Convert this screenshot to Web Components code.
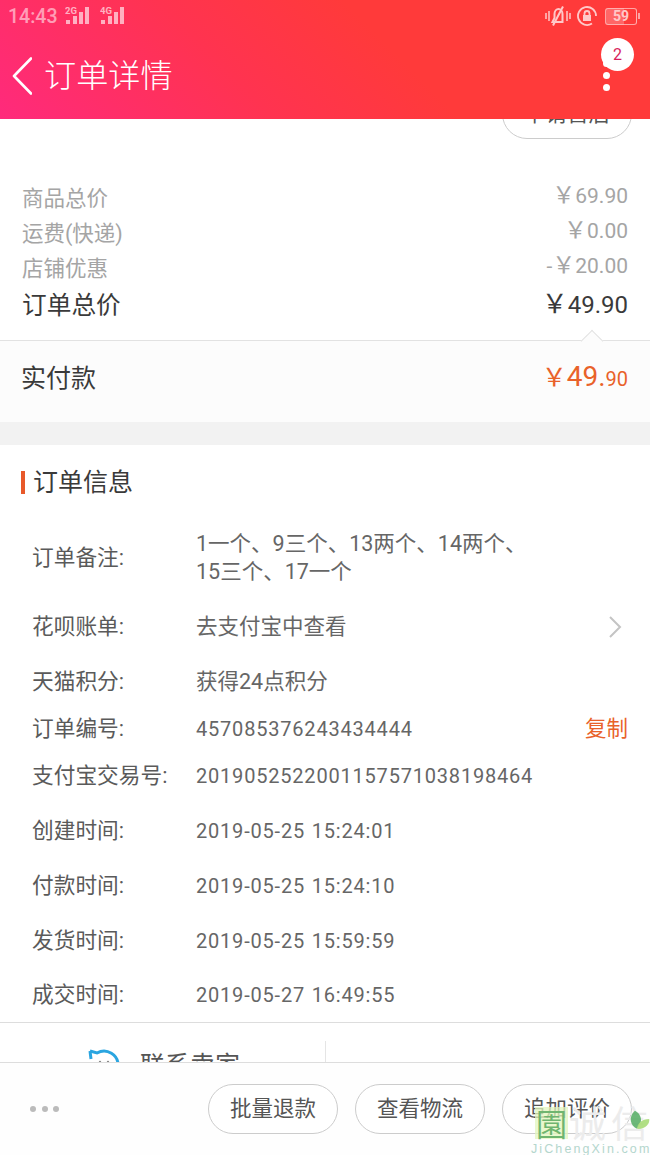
<!DOCTYPE html>
<html lang="zh">
<head>
<meta charset="utf-8">
<title>订单详情</title>
<style>
    html, body { margin: 0; padding: 0; background: #fff; }
    body {
        width: 650px;
        height: 1155px;
        overflow: hidden;
        display: flex;
        flex-direction: column;
        position: relative;
        font-family: Roboto, "Noto Sans CJK SC", sans-serif;
    }
    main { display: block; flex: 1; min-height: 0; overflow: hidden; }
</style>
</head>
<body>
    <app-header title="订单详情" count="2"></app-header>
    <main>
        <price-summary>
            <price-row label="商品总价" amount="69.90"></price-row>
            <price-row label="运费(快递)" amount="0.00"></price-row>
            <price-row label="店铺优惠" amount="20.00" prefix="-"></price-row>
            <price-row label="订单总价" amount="49.90" total></price-row>
        </price-summary>
        <pay-row label="实付款" yuan="49." cents="90"></pay-row>
        <info-section title="订单信息">
            <info-row label="订单备注:" style="--h:78px" note>1一个、9三个、13两个、14两个、<br>15三个、17一个</info-row>
            <info-row label="花呗账单:" style="--h:60px" cjk>去支付宝中查看
                <svg slot="end" style="margin-right:6px" width="14" height="22" viewBox="0 0 14 22" fill="none" stroke="#c4c4c4" stroke-width="2"><path d="M2 1l10 10L2 21"/></svg>
            </info-row>
            <info-row label="天猫积分:" style="--h:50px" cjk>获得24点积分</info-row>
            <info-row label="订单编号:" style="--h:44px">457085376243434444<span slot="end" style="color:#e9622a;font-size:21.5px">复制</span></info-row>
            <info-row label="支付宝交易号:" style="--h:50px">2019052522001157571038198464</info-row>
            <info-row label="创建时间:" style="--h:60px" date>2019-05-25&nbsp;15:24:01</info-row>
            <info-row label="付款时间:" style="--h:50px" date>2019-05-25&nbsp;15:24:10</info-row>
            <info-row label="发货时间:" style="--h:60px" date>2019-05-25&nbsp;15:59:59</info-row>
            <info-row label="成交时间:" style="--h:48px" date>2019-05-27&nbsp;16:49:55</info-row>
        </info-section>
        <contact-bar></contact-bar>
    </main>
    <action-bar>
        <pill-button>批量退款</pill-button>
        <pill-button>查看物流</pill-button>
        <pill-button>追加评价</pill-button>
    </action-bar>
    <water-mark></water-mark>

<script>
const CJK = `Roboto, "Noto Sans CJK SC", sans-serif`;


class statusBar extends HTMLElement {
    constructor() {
        super();
        this.attachShadow({ mode: 'open' });

        const signal = (tag) => `
            <svg width="24" height="20" viewBox="0 0 24 20">
                <text x="0" y="8" font-size="9.5" font-weight="700" font-family="Roboto" fill="#fff">${tag}</text>
                <rect x="1" y="14" width="4" height="4" fill="#fff"/>
                <rect x="8" y="10" width="4" height="8" fill="#fff"/>
                <rect x="14" y="6" width="4" height="12" fill="#fff"/>
                <rect x="20" y="1" width="4" height="17" fill="#fff"/>
            </svg>`;

        this.shadowRoot.innerHTML = `
        <style>
            :host {
                display: flex;
                align-items: center;
                height: 32px;
                padding: 0 13px 0 8px;
                color: rgba(255,255,255,.55);
            }
            .time { font: 500 19.5px/33px Roboto, sans-serif; width: 57px; }
            .signal { display: flex; gap: 11px; opacity: .62; margin-top: -1px; }
            .right { margin-left: auto; display: flex; align-items: center; opacity: .72; }
            .right svg:first-child { margin-right: 6px; }
            .right svg:nth-child(2) { margin-right: 8px; }
            .battery {
                width: 32px; height: 17px;
                box-sizing: border-box;
                border: 1.5px solid rgba(255,255,255,.75);
                border-radius: 3px;
                background: linear-gradient(90deg, rgba(255,255,255,.32) 59%, transparent 59%);
                color: #fff;
                font: 700 14px/14px Roboto, sans-serif;
                text-align: center;
                position: relative;
            }
            .battery::after {
                content: "";
                position: absolute;
                right: -4px; top: 4px;
                width: 2px; height: 6px;
                background: rgba(255,255,255,.75);
            }
        </style>
        <span class="time">14:43</span>
        <div class="signal">${signal('2G')}${signal('4G')}</div>
        <div class="right">
            <svg width="26" height="20" viewBox="0 0 26 20" fill="none" stroke="#fff" stroke-width="2">
                <path d="M1 7v6M4 5v10M22 5v10M25 7v6" stroke-width="1.5"/>
                <path d="M7.5 16l2-4V8c0-3 2-5 4-5s4 2 4 5v8z"/>
                <path d="M8 19.5L18 .5" stroke-width="2"/>
            </svg>
            <svg width="20" height="20" viewBox="0 0 20 20" fill="none" stroke="#fff" stroke-width="1.8">
                <path d="M15 17.5A9 9 0 1 1 19 10"/>
                <rect x="6" y="9" width="8" height="6" fill="#fff" stroke="none"/>
                <path d="M7.5 9V7.5a2.5 2.5 0 0 1 5 0V9"/>
            </svg>
            <span class="battery">59</span>
        </div>
        `;
    }
}
customElements.define('status-bar', statusBar);


class appHeader extends HTMLElement {
    constructor() {
        super();
        this.attachShadow({ mode: 'open' });
    }

    connectedCallback() {
        this.shadowRoot.innerHTML = `
        <style>
            :host {
                display: block;
                flex: none;
                height: 119px;
                background: linear-gradient(45deg, #ff2a7c 0%, #ff3350 36%, #ff3a3a 60%);
                color: #fff;
            }
            .bar { display: flex; align-items: center; height: 87px; padding-left: 12px; padding-right: 40px; }
            svg { display: block; flex: none; }
            h1 {
                margin: 0 0 0 12px;
                font: 300 32.2px/40px ${CJK};
                flex: 1;
            }
            .menu { position: relative; display: flex; flex-direction: column; gap: 5px; }
            .menu i { display: block; width: 7px; height: 7px; border-radius: 50%; background: #fff; }
            .badge {
                position: absolute;
                left: -2px; top: -22px;
                width: 33px; height: 33px;
                border-radius: 50%;
                background: #fff;
                color: #d81e5b;
                font: 400 16px/33px Roboto, sans-serif;
                text-align: center;
            }
        </style>
        <status-bar></status-bar>
        <div class="bar">
            <svg width="20" height="38" viewBox="0 0 20 38" fill="none" stroke="#fff" stroke-width="2.6" stroke-linecap="round" stroke-linejoin="round"><path d="M19 1.5L2 19l17 17.5"/></svg>
            <h1>${this.getAttribute('title')}</h1>
            <div class="menu"><i></i><i></i><i></i><span class="badge">${this.getAttribute('count')}</span></div>
        </div>
        `;
    }
}
customElements.define('app-header', appHeader);


class priceSummary extends HTMLElement {
    constructor() {
        super();
        this.attachShadow({ mode: 'open' });
        this.shadowRoot.innerHTML = `
        <style>
            :host { display: block; background: #fff; padding-bottom: 15px; }
            .clip {
                height: 20px;
                overflow: hidden;
                display: flex;
                justify-content: flex-end;
                align-items: flex-end;
                padding-right: 18px;
                margin-bottom: 41px;
            }
        </style>
        <div class="clip"><pill-button>申请售后</pill-button></div>
        <slot></slot>
        `;
    }
}
customElements.define('price-summary', priceSummary);


class priceRow extends HTMLElement {
    constructor() {
        super();
        this.attachShadow({ mode: 'open' });
    }

    connectedCallback() {
        const prefix = this.getAttribute('prefix') || '';
        this.shadowRoot.innerHTML = `
        <style>
            :host {
                display: flex;
                align-items: center;
                justify-content: space-between;
                height: 35px;
                padding: 0 22px;
                color: #a5a5a5;
                font: 21.5px/30px ${CJK};
            }
            :host([total]) { height: 40px; color: #3a3a3a; font-size: 24.7px; }
            .label { margin-top: 2px; }
            .amount { font-size: 21px; white-space: nowrap; margin-bottom: 4px; }
            :host([total]) .amount { font-size: 24px; margin-bottom: 1px; }
            .sign { font-family: "Noto Sans CJK SC", sans-serif; font-size: 23px; line-height: 1; }
            :host([total]) .sign { font-size: 26px; }
        </style>
        <span class="label">${this.getAttribute('label')}</span>
        <span class="amount">${prefix}<span class="sign">￥</span>${this.getAttribute('amount')}</span>
        `;
    }
}
customElements.define('price-row', priceRow);


class payRow extends HTMLElement {
    constructor() {
        super();
        this.attachShadow({ mode: 'open' });
    }

    connectedCallback() {
        this.shadowRoot.innerHTML = `
        <style>
            :host {
                display: flex;
                align-items: flex-start;
                justify-content: space-between;
                position: relative;
                height: 81px;
                padding: 0 22px;
                background: #fcfcfc;
                border-top: 1px solid #e2e2e2;
                font-family: ${CJK};
            }
            .label { font-size: 25px; line-height: 36px; color: #3a3a3a; margin-top: 20px; margin-left: -1px; }
            .amount { color: #e9622a; font-size: 28px; line-height: 36px; margin-top: 18px; white-space: nowrap; }
            .sign { font: 25px/1 "Noto Sans CJK SC", sans-serif; }
            .cents { font-size: 20px; }
            .notch {
                position: absolute;
                right: 50px; top: -8px;
                width: 15px; height: 15px;
                background: #fcfcfc;
                border: 1px solid #e2e2e2;
                border-right: 0; border-bottom: 0;
                transform: rotate(45deg);
            }
        </style>
        <i class="notch"></i>
        <span class="label">${this.getAttribute('label')}</span>
        <span class="amount"><span class="sign">￥</span>${this.getAttribute('yuan')}<span class="cents">${this.getAttribute('cents')}</span></span>
        `;
    }
}
customElements.define('pay-row', payRow);


class infoSection extends HTMLElement {
    constructor() {
        super();
        this.attachShadow({ mode: 'open' });
    }

    connectedCallback() {
        this.shadowRoot.innerHTML = `
        <style>
            :host {
                display: block;
                border-top: 23px solid #f2f2f2;
                border-bottom: 1px solid #ddd;
                padding-bottom: 3px;
                background: #fff;
            }
            h2 {
                display: flex;
                align-items: center;
                gap: 8px;
                height: 74px;
                margin: 0;
                padding-left: 21px;
                font: 400 25px/30px ${CJK};
                color: #3a3a3a;
            }
            h2::before { content: ""; width: 4px; height: 23px; background: #e8592a; }
            h2 span { margin-top: 2px; }
        </style>
        <h2><span>${this.getAttribute('title')}</span></h2>
        <slot></slot>
        `;
    }
}
customElements.define('info-section', infoSection);


class infoRow extends HTMLElement {
    constructor() {
        super();
        this.attachShadow({ mode: 'open' });
    }

    connectedCallback() {
        this.shadowRoot.innerHTML = `
        <style>
            :host {
                display: grid;
                grid-template-columns: 164px 1fr auto;
                align-items: center;
                height: var(--h);
                padding: 0 22px 0 32px;
                color: #666;
                font: 20px/28px ${CJK};
            }
            .label { font-size: 21.7px; color: #5a5a5a; white-space: nowrap; }
            .value { letter-spacing: .8px; white-space: nowrap; }
            :host([cjk]) .value { font-size: 21.5px; letter-spacing: 0; }
            :host([note]) .value { font-size: 21.5px; letter-spacing: 0; }
            :host([date]) .value { word-spacing: 1px; }
            ::slotted([slot=end]) { display: block; }
        </style>
        <span class="label">${this.getAttribute('label')}</span>
        <span class="value"><slot></slot></span>
        <slot name="end"></slot>
        `;
    }
}
customElements.define('info-row', infoRow);


class contactBar extends HTMLElement {
    constructor() {
        super();
        this.attachShadow({ mode: 'open' });
        this.shadowRoot.innerHTML = `
        <style>
            :host {
                display: grid;
                grid-template-columns: 325px 1fr;
                height: 39px;
                overflow: hidden;
                background: #fff;
            }
            .cell { display: flex; padding: 26px 0 0 88px; gap: 20px; align-items: flex-start; }
            svg { display: block; flex: none; }
            span { font: 25px/34px ${CJK}; color: #555; white-space: nowrap; }
            .divider { border-left: 1px solid #e5e5e5; margin-top: 18px; }
        </style>
        <div class="cell">
            <svg width="32" height="30" viewBox="0 0 32 30" fill="none" stroke="#2aa5e0" stroke-width="3">
                <path d="M2 2l7 2a14 14 0 0 1 21 13"/>
                <path d="M2 2l1 8M2 14v4"/>
                <circle cx="12" cy="13" r="1.2" fill="#888" stroke="none"/>
                <circle cx="20" cy="13" r="1.2" fill="#888" stroke="none"/>
            </svg>
            <span>联系卖家</span>
        </div>
        <div class="divider"></div>
        `;
    }
}
customElements.define('contact-bar', contactBar);


class pillButton extends HTMLElement {
    constructor() {
        super();
        this.attachShadow({ mode: 'open' });
        this.shadowRoot.innerHTML = `
        <style>
            :host {
                display: flex;
                align-items: center;
                justify-content: center;
                flex: none;
                box-sizing: border-box;
                width: 130px;
                height: 50px;
                border: 1px solid #ccc;
                border-radius: 25px;
                background: #fff;
                color: #555;
                font: 21.5px/30px ${CJK};
            }
        </style>
        <slot></slot>
        `;
    }
}
customElements.define('pill-button', pillButton);


class actionBar extends HTMLElement {
    constructor() {
        super();
        this.attachShadow({ mode: 'open' });
        this.shadowRoot.innerHTML = `
        <style>
            :host {
                display: flex;
                align-items: flex-start;
                flex: none;
                height: 93px;
                padding: 21px 18px 0 30px;
                box-sizing: border-box;
                border-top: 1px solid #ddd;
                background: #fefefe;
            }
            .more { display: flex; gap: 5.5px; margin: 22px auto 0 0; }
            .more i { display: block; width: 6px; height: 6px; border-radius: 50%; background: #bbb; }
            .buttons { display: flex; gap: 17px; }
        </style>
        <div class="more"><i></i><i></i><i></i></div>
        <div class="buttons"><slot></slot></div>
        `;
    }
}
customElements.define('action-bar', actionBar);


class waterMark extends HTMLElement {
    constructor() {
        super();
        this.attachShadow({ mode: 'open' });
        this.shadowRoot.innerHTML = `
        <style>
            :host {
                position: absolute;
                left: 530px; top: 1104px;
                width: 120px; height: 51px;
                overflow: hidden;
                pointer-events: none;
            }
            .box {
                position: absolute;
                left: 5px; top: 3px;
                width: 33px; height: 32px;
                background: rgba(226,245,190,.75);
                color: #6fb56f;
                font: 31px/32px "Noto Sans CJK TC", sans-serif;
                text-align: center;
            }
            .name {
                position: absolute;
                left: 39px; top: -2px;
                color: #ececec;
                font: 37px/40px "Noto Sans CJK SC", sans-serif;
                white-space: nowrap;
                letter-spacing: 5px;
            }
            .url {
                position: absolute;
                left: 1px; top: 37px;
                font: 12.5px/16px "Liberation Sans", sans-serif;
                letter-spacing: 2.1px;
                color: #b4d6cd;
                white-space: nowrap;
            }
            svg { position: absolute; left: 98px; top: 4px; }
        </style>
        <div class="name">诚信</div>
        <div class="box">園</div>
        <svg width="22" height="22" viewBox="0 0 29 26">
            <path d="M12 26C3 22 0 10 9 2c5 2 9 8 8 14z" fill="#5cb06a" opacity=".9"/>
            <path d="M12 26c0-7 6-13 16-13 1 7-6 14-16 13z" fill="#a8dc78" opacity=".9"/>
        </svg>
        <div class="url">JiChengXin.com</div>
        `;
    }
}
customElements.define('water-mark', waterMark);
</script>
</body>
</html>
